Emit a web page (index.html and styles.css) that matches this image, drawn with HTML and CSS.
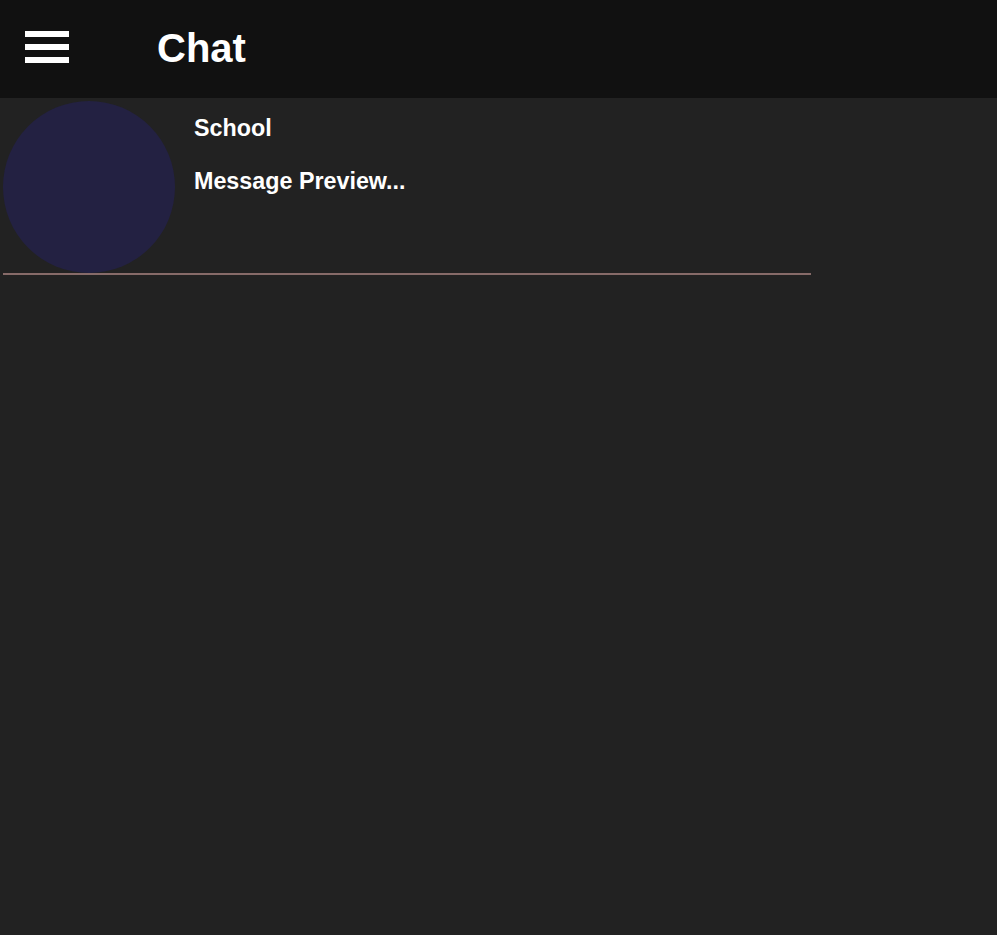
FILE: index.html
```html
<!DOCTYPE html>
<html>
<head>
<meta charset="utf-8">
<link rel="stylesheet" href="styles.css">
</head>
<body>
<header class="topbar">
  <div class="menu" aria-label="menu">
    <span class="bar"></span>
    <span class="bar"></span>
    <span class="bar"></span>
  </div>
  <h1 class="title">Chat</h1>
</header>
<main class="list">
  <div class="chat-item">
    <div class="avatar"></div>
    <div class="info">
      <div class="name">School</div>
      <div class="preview">Message Preview...</div>
    </div>
  </div>
</main>
</body>
</html>
```
FILE: styles.css
```css
html, body {
  margin: 0;
  padding: 0;
  background: #222222;
  font-family: "Liberation Sans", Arial, sans-serif;
  color: #ffffff;
  height: 100%;
}
.topbar {
  height: 98px;
  background: #111111;
  display: flex;
  align-items: center;
  box-sizing: border-box;
  padding-left: 25px;
}
.menu {
  display: flex;
  flex-direction: column;
  gap: 7px;
  width: 44px;
  align-self: flex-start;
  margin-top: 31px;
}
.bar {
  display: block;
  height: 6px;
  background: #ffffff;
}
.title {
  margin: 0 0 0 88px;
  font-size: 40px;
  font-weight: bold;
  line-height: 1;
  margin-top: -3px;
}
.list {
  padding: 3px;
}
.chat-item {
  width: 808px;
  display: flex;
  border-bottom: 2px solid #876b69;
}
.avatar {
  width: 172px;
  height: 172px;
  border-radius: 50%;
  background: #232142;
  flex: none;
}
.info {
  margin-left: 19px;
  font-weight: bold;
  font-size: 23.3px;
}
.name {
  margin-top: 14px;
  line-height: 26px;
}
.preview {
  margin-top: 27px;
  line-height: 26px;
}
```
